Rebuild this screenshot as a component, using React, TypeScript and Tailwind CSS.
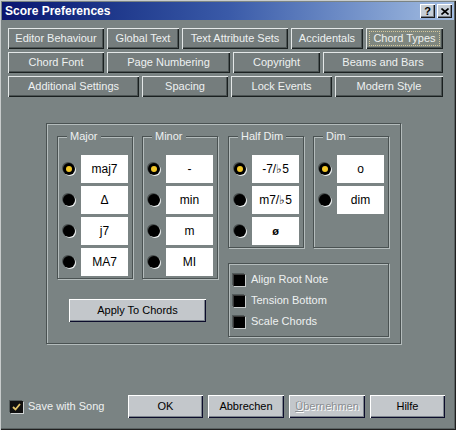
import type { ReactNode } from "react";

type Tab = { label: string; w: string; selected?: boolean };

const tabRows: Tab[][] = [
  [
    { label: "Editor Behaviour", w: "w-[96px]" },
    { label: "Global Text", w: "w-[72px]" },
    { label: "Text Attribute Sets", w: "w-[106px]" },
    { label: "Accidentals", w: "w-[72px]" },
    { label: "Chord Types", w: "w-[77px]", selected: true },
  ],
  [
    { label: "Chord Font", w: "w-[96px]" },
    { label: "Page Numbering", w: "w-[123px]" },
    { label: "Copyright", w: "w-[87px]" },
    { label: "Beams and Bars", w: "w-[120px]" },
  ],
  [
    { label: "Additional Settings", w: "w-[131px]" },
    { label: "Spacing", w: "w-[86px]" },
    { label: "Lock Events", w: "w-[101px]" },
    { label: "Modern Style", w: "w-[108px]" },
  ],
];

const raised =
  "shadow-[inset_1px_1px_0_#e4e8e8,inset_-1px_-1px_0_#1a2020,inset_-2px_-2px_0_#4c5454]";
const etched = "border border-[#4a5252] shadow-[inset_1px_1px_0_#b4bcbc,1px_1px_0_#b4bcbc]";
const button =
  "h-[23px] flex items-center justify-center bg-[#c3c7cb] text-[11px] shadow-[inset_1px_1px_0_#ffffff,inset_-1px_-1px_0_#0c0c2c,inset_-2px_-2px_0_#7c848c]";

function TabButton({ tab }: { tab: Tab }) {
  return (
    <div
      className={`${tab.w} h-[21px] flex items-stretch text-[11px] text-[#eef1f1] ${
        tab.selected ? "bg-[#7f877f]" : "bg-[#757d7d]"
      } ${raised}`}
    >
      {tab.selected ? (
        <div className="m-[3px] flex-1 flex items-center justify-center border border-dotted border-[#d6c89c]">
          {tab.label}
        </div>
      ) : (
        <div className="flex-1 flex items-center justify-center">{tab.label}</div>
      )}
    </div>
  );
}

function Radio({ on }: { on?: boolean }) {
  return (
    <div className="w-[12px] h-[12px] shrink-0 rounded-full bg-black flex items-center justify-center shadow-[1px_1px_0_#e8ecec,-1px_-1px_0_#4a5050]">
      {on && <div className="w-[6px] h-[6px] rounded-full bg-[#f2c628]" />}
    </div>
  );
}

function Group({ title, items }: { title: string; items: string[] }) {
  return (
    <div className={`relative w-[76px] pt-[18px] pb-[2px] pl-[5px] pr-[4px] flex flex-col gap-[3px] ${etched}`}>
      <span className="absolute -top-[7px] left-[9px] px-[3px] bg-[#7a8383] text-[11px] leading-[13px] text-[#eef1f1]">
        {title}
      </span>
      {items.map((item, i) => (
        <div key={item} className="h-[28px] flex items-center gap-[6px]">
          <Radio on={i === 0} />
          <div className="w-[47px] h-[28px] bg-white flex items-center justify-center text-[12px] text-black">
            {item === "ø" ? <span className="font-bold text-[11px]">ø</span> : item}
          </div>
        </div>
      ))}
    </div>
  );
}

function Check({ label }: { label: string }) {
  return (
    <div className="h-[21px] flex items-center gap-[6px]">
      <div className="w-[12px] h-[12px] bg-black shadow-[inset_1px_1px_0_#3a3a3a,1px_1px_0_#c8cccc,-1px_-1px_0_#545c5c]" />
      <span className="text-[11px] text-[#eef1f1]">{label}</span>
    </div>
  );
}

function TitleButton({ children }: { children: ReactNode }) {
  return (
    <div className="w-[15px] h-[14px] flex items-center justify-center bg-[#c6ced6] text-[11px] font-bold text-black shadow-[inset_1px_1px_0_#ffffff,inset_-1px_-1px_0_#1a1a1a,inset_-2px_-2px_0_#7a8088]">
      {children}
    </div>
  );
}

export default function App() {
  return (
    <div className="w-[456px] h-[430px] p-[2px] flex flex-col bg-[#7a8383] font-['Liberation_Sans',Arial,sans-serif] shadow-[inset_1px_1px_0_#c8cccc,inset_-1px_-1px_0_#202020,inset_-2px_-2px_0_#5a6262]">
      {/* Title bar */}
      <div className="h-[18px] flex items-center justify-between pl-[3px] pr-[2px] bg-linear-to-r from-[#0b1470] via-[#3a5aa8] to-[#a4bee2]">
        <span className="text-[12px] font-bold text-white">Score Preferences</span>
        <div className="flex gap-[2px]">
          <TitleButton>?</TitleButton>
          <TitleButton>
            <svg width="8" height="7" viewBox="0 0 8 7">
              <path d="M0.5 0.5 L7.5 6.5 M7.5 0.5 L0.5 6.5" stroke="#000" strokeWidth="1.6" />
            </svg>
          </TitleButton>
        </div>
      </div>

      {/* Tabs */}
      <div className="mt-[8px] px-[6px] flex flex-col gap-[3px]">
        {tabRows.map((row, r) => (
          <div key={r} className="flex gap-[3px]">
            {row.map((tab) => (
              <TabButton key={tab.label} tab={tab} />
            ))}
          </div>
        ))}
      </div>

      {/* Chord types panel */}
      <div className={`mt-[26px] ml-[44px] w-[355px] h-[221px] pt-[12px] pl-[10px] pr-[11px] flex gap-[10px] ${etched}`}>
        <div className="w-[161px] flex flex-col">
          <div className="flex gap-[9px]">
            <Group title="Major" items={["maj7", "Δ", "j7", "MA7"]} />
            <Group title="Minor" items={["-", "min", "m", "MI"]} />
          </div>
          <button className={`mt-[20px] ml-[12px] w-[137px] text-black ${button}`}>Apply To Chords</button>
        </div>
        <div className="w-[161px] flex flex-col">
          <div className="flex gap-[9px] items-stretch">
            <Group title="Half Dim" items={["-7/♭5", "m7/♭5", "ø"]} />
            <Group title="Dim" items={["o", "dim"]} />
          </div>
          <div className={`mt-[15px] h-[74px] pt-[5px] pl-[4px] flex flex-col ${etched}`}>
            <Check label="Align Root Note" />
            <Check label="Tension Bottom" />
            <Check label="Scale Chords" />
          </div>
        </div>
      </div>

      {/* Bottom row */}
      <div className="mt-[51px] h-[23px] pl-[8px] pr-[9px] flex items-center">
        <div className="flex items-center gap-[5px]">
          <div className="w-[13px] h-[12px] bg-[#101010] flex items-center justify-center shadow-[1px_1px_0_#d0d4d4,-1px_-1px_0_#545c5c]">
            <svg width="9" height="8" viewBox="0 0 9 8">
              <path d="M1 4 L3.5 6.5 L8 1" fill="none" stroke="#e2c46a" strokeWidth="1.8" />
            </svg>
          </div>
          <span className="text-[11px] text-[#eef1f1]">Save with Song</span>
        </div>
        <div className="ml-auto flex gap-[5px]">
          <button className={`w-[75px] text-black ${button}`}>OK</button>
          <button className={`w-[76px] text-black ${button}`}>Abbrechen</button>
          <button className={`w-[76px] text-[#8a8e92] [text-shadow:1px_1px_0_#ffffff] ${button}`}>
            <span className="underline">Ü</span>bernehmen
          </button>
          <button className={`w-[75px] text-black ${button}`}>Hilfe</button>
        </div>
      </div>
    </div>
  );
}
